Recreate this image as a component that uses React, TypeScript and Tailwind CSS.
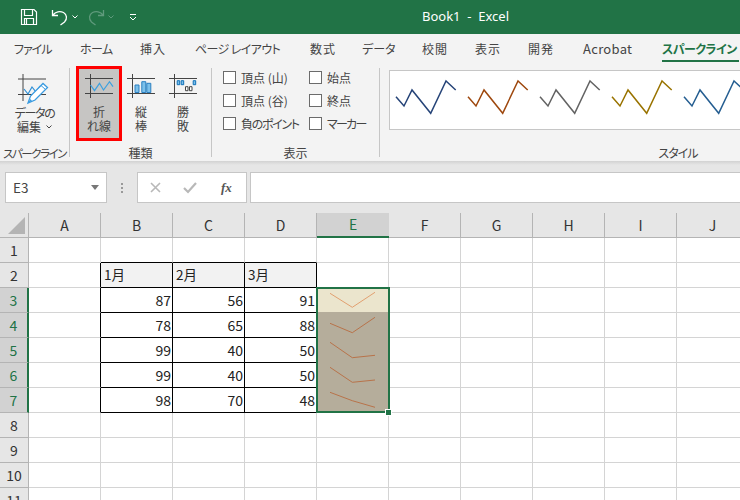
import React from "react";

const JP = "font-['Noto_Sans_CJK_JP','Noto_Sans',sans-serif]";

const tabs: { t: string; c: string }[] = [
  { t: "ファイル", c: "w-[37px] ml-[14px] tracking-[-1px]" },
  { t: "ホーム", c: "w-[33px] ml-[29px] tracking-[-0.6px]" },
  { t: "挿入", c: "w-[26px] ml-[27px] tracking-[1px]" },
  { t: "ページ レイアウト", c: "w-[85px] ml-[29px] tracking-[-0.6px]" },
  { t: "数式", c: "w-[26px] ml-[30px] tracking-[1px]" },
  { t: "データ", c: "w-[33px] ml-[26px]" },
  { t: "校閲", c: "w-[26px] ml-[27px] tracking-[1px]" },
  { t: "表示", c: "w-[26px] ml-[27px] tracking-[1px]" },
  { t: "開発", c: "w-[26px] ml-[27px] tracking-[1px]" },
  { t: "Acrobat", c: "w-[50px] ml-[29px] text-[13px] tracking-[0.3px]" },
];

function Cross() {
  return (
    <path d="M0 4.5H28M0 19.5H28M5.5 0V24" stroke="#444" strokeWidth="1" fill="none" />
  );
}

function TitleIcons() {
  return (
    <div className="flex items-center h-full">
      <svg className="ml-[20px]" width="18" height="18" viewBox="0 0 18 18" fill="none" stroke="#fff" strokeWidth="1.2">
        <path d="M1.5 1.5H14L16.5 4V16.5H1.5Z" />
        <path d="M4.5 1.5V7.5H12.5V1.5M4.5 16.5V10.5H13.5V16.5M6.5 11V16" />
      </svg>
      <svg className="ml-[13px]" width="18" height="18" viewBox="0 0 18 18" fill="none" stroke="#fff" strokeWidth="1.3">
        <path d="M1.5 2V7.5H7M2 7C4.5 3.5 9 2.8 12.5 4.5C16 6.5 16.5 11 13.5 14L9.5 17" />
      </svg>
      <svg className="ml-[3px]" width="6" height="4" viewBox="0 0 6 4" fill="none" stroke="#fff"><path d="M.5 .5 3 3 5.5 .5" /></svg>
      <svg className="ml-[9px]" width="18" height="18" viewBox="0 0 18 18" fill="none" stroke="#5f9a7c" strokeWidth="1.3">
        <path d="M16.5 2V7.5H11M16 7C13.5 3.5 9 2.8 5.5 4.5C2 6.5 1.5 11 4.5 14L8.5 17" />
      </svg>
      <svg className="ml-[3px]" width="6" height="4" viewBox="0 0 6 4" fill="none" stroke="#5f9a7c"><path d="M.5 .5 3 3 5.5 .5" /></svg>
      <svg className="ml-[15px]" width="8" height="8" viewBox="0 0 8 8" fill="none" stroke="#fff"><path d="M1 1.5H7M1 4 4 7 7 4" /></svg>
    </div>
  );
}

function Check({ label, tight }: { label: string; tight?: string }) {
  return (
    <div className="flex items-center h-[23px]">
      <div className="w-[13px] h-[13px] border border-[#6b6b6b] bg-white shrink-0" />
      <span className={`ml-[5px] text-[12px] text-[#444] whitespace-nowrap [font-feature-settings:'palt'] ${tight ?? ""}`}>{label}</span>
    </div>
  );
}

function BigBtn({ icon, l1, l2 }: { icon: React.ReactNode; l1: string; l2: string }) {
  return (
    <div className="flex flex-col items-center">
      {icon}
      <div className="mt-[7px] text-center text-[12px] leading-[14px] text-[#444]">
        <div>{l1}</div>
        <div>{l2}</div>
      </div>
    </div>
  );
}

const styleColors = ["#264478", "#9e480e", "#636363", "#997300", "#255e91"];

function Gallery() {
  return (
    <div className="w-[360px] h-[60px] mt-[8px] ml-[9px] bg-white border border-[#c6c6c6] flex shrink-0">
      {styleColors.map((c) => (
        <svg key={c} width="72" height="58" viewBox="0 0 72 58" className="shrink-0" fill="none" stroke={c} strokeWidth="1.5">
          <path d="M6 25.7 14 35 22 19 40.7 42.3 56 10 65.7 19" />
        </svg>
      ))}
    </div>
  );
}

function Ribbon() {
  return (
    <div className="flex h-[99px] bg-[#f3f3f3] overflow-hidden">
      <div className="w-[69px] shrink-0 flex flex-col">
        <div className="flex-1 flex justify-center">
          <div className="flex flex-col items-center pt-[12px]">
            <svg width="32" height="32" viewBox="0 0 32 32" fill="none">
              <path d="M0 5H28M0 20.5H28M5 0V27" stroke="#444" />
              <path d="M6 15 10 20 14 13 18 18 22 12" stroke="#2e8fd6" strokeWidth="1.2" />
              <path d="M10 29 12.5 22 25 9.5 29.5 13.5 17 26Z" fill="#fff" stroke="#3a9be0" strokeWidth="1.3" />
              <path d="M10 29 12.5 25 14 27Z" fill="#3a9be0" />
              <path d="M23 11.5 27.5 15.5" stroke="#3a9be0" />
            </svg>
            <div className="text-center text-[12px] leading-[14px] text-[#444] whitespace-nowrap [font-feature-settings:'palt']">
              <div className="tracking-[-1.3px]">データの</div>
              <div className="flex items-center justify-center gap-[5px]">
                編集
                <svg width="6" height="4" viewBox="0 0 6 4" fill="none" stroke="#444"><path d="M.5 .5 3 3 5.5 .5" /></svg>
              </div>
            </div>
          </div>
        </div>
        <div className="h-[16px] text-center text-[11.5px] leading-[16px] tracking-[-1.5px] text-[#444] whitespace-nowrap [font-feature-settings:'palt']">スパークライン</div>
      </div>
      <div className="w-px mt-[6px] mb-[4px] bg-[#c6c6c6] shrink-0" />

      <div className="w-[141px] shrink-0 flex flex-col">
        <div className="flex-1 flex pt-[4px]">
          <div className="ml-[6px] w-[46px] h-[75px] border-[3px] border-[#ff0000] bg-[#c6c5c3] flex justify-center pt-[5px] shrink-0">
            <BigBtn
              icon={
                <svg width="29" height="24" viewBox="0 0 29 24" fill="none">
                  <Cross />
                  <path d="M5.5 11 9.500 16.700 14.500 9.300 18.500 16 24.500 7.700 28 12.700" stroke="#3aa0e0" strokeWidth="1.2" />
                </svg>
              }
              l1="折"
              l2="れ線"
            />
          </div>
          <div className="ml-[5px] w-[28px] pt-[8px] shrink-0">
            <BigBtn
              icon={
                <svg width="28" height="24" viewBox="0 0 28 24" fill="none">
                  <Cross />
                  <path d="M8 11h4v7.500h-4zM14.800 7.700h4v10.800h-4zM19.800 9.300h4v9.200h-4z" fill="#7cc0ea" stroke="#2a7fc0" />
                </svg>
              }
              l1="縦"
              l2="棒"
            />
          </div>
          <div className="ml-[14px] w-[28px] pt-[8px] shrink-0">
            <BigBtn
              icon={
                <svg width="28" height="24" viewBox="0 0 28 24" fill="none">
                  <Cross />
                  <path d="M8.200 6.700h2.500v4h-2.500zM12.200 6.700h2.500v4h-2.500zM24.200 6.700h2.500v4h-2.500z" fill="#7cc0ea" stroke="#1070b8" />
                  <path d="M16.500 12.700h2.500v4h-2.500zM20.500 12.700h2.500v4h-2.500z" fill="#fff" stroke="#444" />
                </svg>
              }
              l1="勝"
              l2="敗"
            />
          </div>
        </div>
        <div className="h-[16px] text-center text-[12px] leading-[16px] text-[#444]">種類</div>
      </div>
      <div className="w-px mt-[6px] mb-[4px] bg-[#c6c6c6] shrink-0" />

      <div className="w-[167px] shrink-0 flex flex-col">
        <div className="flex-1 flex pt-[4px] pl-[11px]">
          <div className="w-[86px] shrink-0">
            <Check label="頂点 (山)" />
            <Check label="頂点 (谷)" />
            <Check label="負のポイント" tight="tracking-[-1.3px]" />
          </div>
          <div>
            <Check label="始点" />
            <Check label="終点" />
            <Check label="マーカー" tight="tracking-[-1.7px]" />
          </div>
        </div>
        <div className="h-[16px] text-center text-[12px] leading-[16px] text-[#444]">表示</div>
      </div>
      <div className="w-px mt-[6px] mb-[4px] bg-[#c6c6c6] shrink-0" />

      <div className="w-[596px] shrink-0 flex flex-col">
        <div className="flex-1">
          <Gallery />
        </div>
        <div className="h-[16px] text-center text-[12px] leading-[16px] tracking-[-1px] text-[#444] [font-feature-settings:'palt']">スタイル</div>
      </div>
    </div>
  );
}

function FormulaBar() {
  return (
    <div className="h-[48px] bg-[#e6e6e6] flex pt-[7px] pl-[5px] overflow-hidden">
      <div className="w-[102px] h-[31px] bg-white border border-[#c6c6c6] flex items-center justify-between pl-[7px] pr-[7px] shrink-0">
        <span className="text-[13.5px] text-[#444]">E3</span>
        <svg width="8" height="5" viewBox="0 0 8 5"><path d="M0 0H8L4 5Z" fill="#777" /></svg>
      </div>
      <div className="w-[30px] h-[31px] flex flex-col items-center justify-center gap-[2px] shrink-0">
        <div className="w-[2px] h-[2px] bg-[#999]" />
        <div className="w-[2px] h-[2px] bg-[#999]" />
        <div className="w-[2px] h-[2px] bg-[#999]" />
      </div>
      <div className="w-[110px] h-[31px] bg-white border border-[#c6c6c6] flex items-center shrink-0">
        <svg className="ml-[12px]" width="11" height="11" viewBox="0 0 11 11" fill="none" stroke="#b8b8b8" strokeWidth="1.6"><path d="M1 1 10 10M10 1 1 10" /></svg>
        <svg className="ml-[22px]" width="14" height="12" viewBox="0 0 14 12" fill="none" stroke="#b8b8b8" strokeWidth="2.2"><path d="M1 6 5 10 13 1" /></svg>
        <span className="ml-[24px] text-[13px] font-bold italic text-[#555] font-['Liberation_Serif',serif]">fx</span>
      </div>
      <div className="ml-[3px] w-[520px] h-[31px] bg-white border border-[#c6c6c6] shrink-0" />
    </div>
  );
}

const colNames = ["A", "B", "C", "D", "E", "F", "G", "H", "I", "J"];

function ColHeaders() {
  return (
    <div className="flex h-[25px] bg-[#e6e6e6]">
      <div className="w-[29px] shrink-0 border-r border-b border-[#b4b4b4] flex items-end justify-end pr-[3px] pb-[3px]">
        <svg width="17" height="17" viewBox="0 0 17 17"><path d="M17 0V17H0Z" fill="#b4b4b4" /></svg>
      </div>
      {colNames.map((c) => (
        <div
          key={c}
          className={
            c === "E"
              ? "w-[72px] shrink-0 bg-[#d2d2d2] border-b-2 border-[#217346] text-[#217346] flex items-center justify-center text-[14px]"
              : "w-[72px] shrink-0 border-r border-b border-[#b4b4b4] flex items-center justify-center text-[14px] text-[#333]"
          }
        >
          {c}
        </div>
      ))}
    </div>
  );
}

const data: Record<number, string[]> = {
  2: ["1月", "2月", "3月"],
  3: ["87", "56", "91"],
  4: ["78", "65", "88"],
  5: ["99", "40", "50"],
  6: ["99", "40", "50"],
  7: ["98", "70", "48"],
};

const sparks: Record<number, string> = {
  3: "13 5.3 35.3 19.3 58 4.3",
  4: "13 10.3 35.3 19.7 58 4.3",
  5: "13 4.3 35.3 19.7 58 17.3",
  6: "13 4.3 35.3 19.3 58 17",
  7: "13 4.3 35.3 12.7 58 19.3",
};

function Row({ n }: { n: number }) {
  const sel = n >= 3 && n <= 7;
  const inTable = n >= 2 && n <= 7;
  const vals = data[n];
  return (
    <div className="flex h-[25px]">
      <div
        className={
          sel
            ? "w-[29px] shrink-0 bg-[#d2d2d2] border-r-2 border-b border-r-[#217346] border-b-[#b4b4b4] text-[#217346] flex items-center justify-center text-[14px]"
            : "w-[29px] shrink-0 bg-[#e6e6e6] border-r border-b border-[#b4b4b4] text-[#333] flex items-center justify-center text-[14px]"
        }
      >
        {n}
      </div>
      {colNames.map((c, i) => {
        const tbl = i >= 1 && i <= 3;
        if (c === "E" && sel) {
          return (
            <div key={c} className={n === 3 ? "w-[72px] shrink-0 bg-[#ebe5cd]" : n === 4 ? "w-[72px] shrink-0 bg-[#b5ad9b] -mt-px pt-px" : "w-[72px] shrink-0 bg-[#b5ad9b]"}>
              <svg className="block" width="72" height="25" viewBox="0 0 72 25" fill="none" stroke={n === 3 ? "#e2a070" : "#b8734a"} strokeWidth="1">
                <polyline points={sparks[n]} />
              </svg>
            </div>
          );
        }
        if (tbl && inTable) {
          return (
            <div
              key={c}
              className={
                n === 2
                  ? "w-[72px] shrink-0 bg-[#f2f2f2] border-r border-b border-black pl-[3px] text-[13.5px] leading-[23px] text-[#222]"
                  : "w-[72px] shrink-0 bg-white border-r border-b border-black pr-[1px] text-right text-[14px] leading-[24px] text-[#222]"
              }
            >
              {vals[i - 1]}
            </div>
          );
        }
        const rightBlack = i === 0 && inTable;
        const bottomBlack = tbl && n === 1;
        return (
          <div
            key={c}
            className={
              rightBlack
                ? "w-[72px] shrink-0 bg-white border-b border-r border-b-[#d4d4d4] border-r-black"
                : bottomBlack
                ? "w-[72px] shrink-0 bg-white border-b border-r border-b-black border-r-[#d4d4d4]"
                : "w-[72px] shrink-0 bg-white border-b border-r border-[#d4d4d4]"
            }
          />
        );
      })}
    </div>
  );
}

export default function App() {
  return (
    <div className={`relative w-[740px] h-[500px] overflow-hidden bg-white ${JP}`}>
      <div className="relative h-[34px] bg-[#217346]">
        <TitleIcons />
        <div className="absolute left-[422px] top-[7px] text-[13px] leading-[18px] text-white font-['Noto_Sans',sans-serif] whitespace-pre">Book1  -  Excel</div>
      </div>
      <div className="flex h-[28px] bg-[#f3f3f3] text-[12px] text-[#444] [font-feature-settings:'palt']">
        {tabs.map((t) => (
          <div key={t.t} className={`${t.c} shrink-0 pt-[7px] leading-[16px] whitespace-nowrap`}>{t.t}</div>
        ))}
        <div className="ml-[29px] w-[77px] shrink-0 pt-[7px] h-[28px] leading-[16px] tracking-[-0.5px] whitespace-nowrap font-bold text-[#217346] border-b-2 border-[#217346]">スパークライン</div>
      </div>
      <Ribbon />
      <div className="h-[4px] bg-gradient-to-b from-[#d2d2d2] to-[#e6e6e6]" />
      <FormulaBar />
      <ColHeaders />
      <div className="relative">
        {[1, 2, 3, 4, 5, 6, 7, 8, 9, 10, 11].map((n) => (
          <Row key={n} n={n} />
        ))}
        <div className="absolute left-[316px] top-[49px] w-[74px] h-[126px] border-2 border-[#217346]" />
        <div className="absolute left-[385px] top-[171px] w-[7px] h-[7px] bg-[#217346] border border-white" />
      </div>
    </div>
  );
}
